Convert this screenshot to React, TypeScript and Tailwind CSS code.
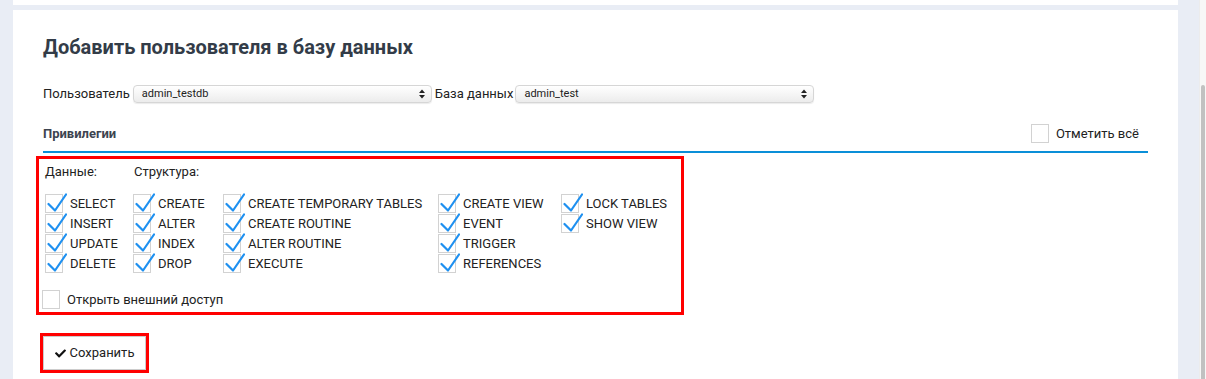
import { ReactNode } from "react";
import { FaCheck } from "react-icons/fa";

const font = { fontFamily: "Roboto, 'Liberation Sans', sans-serif" };

function Check({ checked = true }: { checked?: boolean }) {
  return (
    <span className="relative inline-block w-[18px] h-[19px] border border-[#d2d2d2] bg-white shrink-0">
      {checked && (
        <svg className="absolute left-[-1px] top-[-3px]" width="22" height="22" viewBox="0 0 22 22" fill="none">
          <path d="M3.5 12 L10 18.5 L21 2.5" stroke="#1e90f0" strokeWidth="2.2" strokeLinecap="round" strokeLinejoin="round" />
        </svg>
      )}
    </span>
  );
}

function Item({ label }: { label: string }) {
  return (
    <div className="flex items-center h-[20px] gap-[7px]">
      <Check />
      <span className="text-[13px] text-[#222]">{label}</span>
    </div>
  );
}

function FakeSelect({ value, width }: { value: string; width: string }) {
  return (
    <div
      className={`${width} h-[18px] rounded-[4px] border border-[#d6d6d6] bg-gradient-to-b from-white to-[#ececec] shadow-[0_1px_1px_rgba(0,0,0,0.08)] flex items-center justify-between pl-[8px] pr-[6px]`}
    >
      <span className="text-[11px] text-[#222]">{value}</span>
      <svg width="6" height="10" viewBox="0 0 6 10">
        <path d="M0 4 L3 0.5 L6 4 Z" fill="#222" />
        <path d="M0 6 L3 9.5 L6 6 Z" fill="#222" />
      </svg>
    </div>
  );
}

function Column({ children, width }: { children: ReactNode; width: string }) {
  return <div className={`${width} flex flex-col`}>{children}</div>;
}

export default function App() {
  return (
    <div className="w-[1206px] h-[379px] bg-[#e9edf5] flex overflow-hidden" style={font}>
      <div className="w-[13px] shrink-0" />
      <div className="w-[1165px] flex flex-col">
        <div className="h-[5px] bg-white" />
        <div className="mt-[5px] flex-1 bg-white px-[30px]">
          <h1 className="mt-[23px] text-[20px] leading-[28px] font-bold text-[#333c48]">
            Добавить пользователя в базу данных
          </h1>

          <div className="mt-[23px] flex items-center text-[13px] text-[#222]">
            <span className="mr-[3px]">Пользователь</span>
            <FakeSelect value="admin_testdb" width="w-[299px]" />
            <span className="ml-[3px] mr-[2px]">База данных</span>
            <FakeSelect value="admin_test" width="w-[299px]" />
          </div>

          <div className="mt-[15px] flex items-center justify-between border-b-2 border-[#0a8fd8] h-[34px] pb-[2px]">
            <span className="text-[13px] font-bold text-[#3d4450]">Привилегии</span>
            <label className="flex items-center gap-[7px] mr-[9px] text-[13px] text-[#222]">
              <Check checked={false} />
              Отметить всё
            </label>
          </div>

          {/* privileges block */}
          <div className="mt-[3px] ml-[-7px] w-[648px] border-[3px] border-[#ff0000] pl-[6px] pt-[3px] pb-[3px]">
            <div className="flex text-[13px] text-[#222] h-[20px] items-center">
              <span className="w-[89px]">Данные:</span>
              <span>Структура:</span>
            </div>
            <div className="mt-[12px] flex">
              <Column width="w-[88px]">
                <Item label="SELECT" />
                <Item label="INSERT" />
                <Item label="UPDATE" />
                <Item label="DELETE" />
              </Column>
              <Column width="w-[90px]">
                <Item label="CREATE" />
                <Item label="ALTER" />
                <Item label="INDEX" />
                <Item label="DROP" />
              </Column>
              <Column width="w-[215px]">
                <Item label="CREATE TEMPORARY TABLES" />
                <Item label="CREATE ROUTINE" />
                <Item label="ALTER ROUTINE" />
                <Item label="EXECUTE" />
              </Column>
              <Column width="w-[123px]">
                <Item label="CREATE VIEW" />
                <Item label="EVENT" />
                <Item label="TRIGGER" />
                <Item label="REFERENCES" />
              </Column>
              <Column width="w-[110px]">
                <Item label="LOCK TABLES" />
                <Item label="SHOW VIEW" />
              </Column>
            </div>
            <label className="mt-[16px] ml-[-3px] flex items-center gap-[7px] text-[13px] text-[#222]">
              <Check checked={false} />
              Открыть внешний доступ
            </label>
          </div>

          <div className="mt-[18px] ml-[-3px] inline-block border-[3px] border-[#ff0000]">
            <button className="m-0 h-[34px] w-[103px] border border-[#cccccc] bg-white text-[13px] text-[#222] flex items-center justify-center gap-[4px]">
              <FaCheck className="w-[11px] h-[11px] text-[#111]" />
              Сохранить
            </button>
          </div>
        </div>
      </div>
      <div className="w-[21px] shrink-0" />
      <div className="w-[7px] shrink-0 bg-[#f7f7f7] border-l border-[#ececec] pt-[85px]">
        <div className="ml-[1px] w-[4px] h-full rounded-t-[3px] bg-[#c1c1c1]" />
      </div>
    </div>
  );
}
